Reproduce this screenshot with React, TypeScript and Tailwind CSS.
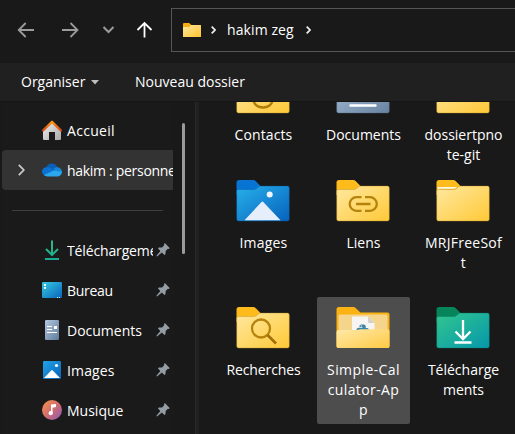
import React from "react";

type IconProps = { className?: string };

/* ---------- large folder icons ---------- */

type FolderProps = {
  id: string;
  tab?: string;
  from?: string;
  to?: string;
  edge?: string;
  children?: React.ReactNode;
};

function Folder({ id, tab = "#fdbb1c", from = "#ffe8a0", to = "#ffc937", edge = "#b58a25", children }: FolderProps) {
  return (
    <svg width="54" height="42" viewBox="0 0 54 42" className="block shrink-0">
      <defs>
        <linearGradient id={id} x1="0" y1="0" x2="1" y2="1">
          <stop offset="0" stopColor={from} />
          <stop offset="1" stopColor={to} />
        </linearGradient>
      </defs>
      <path d="M.5 2.5a2.500 2.500 0 0 1 2.500-2.500h13.500c1.500 0 2.600.4 3.600 1.500l4.400 4.500v9H.5z" fill={tab} />
      <path
        d="M.7 11a1.500 1.500 0 0 1 1.500-1.500h15.500c1.300 0 2.200-.4 3.100-1.200l1.500-1.300c.8-.7 1.500-.9 2.600-.9H51.500a1.800 1.800 0 0 1 1.800 1.800V39.200a1.800 1.800 0 0 1-1.800 1.800H2.500a1.800 1.800 0 0 1-1.800-1.800z"
        fill={`url(#${id})`}
        stroke={edge}
        strokeOpacity=".55"
        strokeWidth=".7"
      />
      {children}
    </svg>
  );
}

const ContactsIcon = () => (
  <Folder id="f-contacts">
    <circle cx="27" cy="17" r="4.500" fill="none" stroke="#b07c08" strokeWidth="2.500" />
    <path d="M17.500 27.500c0 10.500 19 10.500 19 0z" fill="none" stroke="#b07c08" strokeWidth="2.500" />
  </Folder>
);

const DocumentsIcon = () => (
  <Folder id="f-docs" tab="#5c7896" from="#a9c0da" to="#67829f" edge="#52677d">
    <path d="M14.500 22h25M14.500 27.500h25M14.500 33.500h25" stroke="#fff" strokeWidth="2.400" strokeLinecap="round" />
  </Folder>
);

const ImagesIcon = () => (
  <Folder id="f-images" tab="#0773d2" from="#27b0ea" to="#0762bd" edge="#07549f">
    <path d="M8.500 40.300 25.300 22.200a1.500 1.500 0 0 1 2.200 0L44.500 40.300z" fill="#e6edfb" />
    <circle cx="33.700" cy="14.400" r="3" fill="#f2f7ff" />
  </Folder>
);

const LinksIcon = () => (
  <Folder id="f-links">
    <g fill="none" stroke="#b5830c" strokeWidth="2.300">
      <path d="M25.500 17.200h-5a6.800 6.800 0 0 0 0 13.600h5M29 17.200h5a6.800 6.800 0 0 1 0 13.600h-5M20 24h14.500" />
    </g>
  </Folder>
);

const PlainIcon = ({ id }: { id: string }) => (
  <Folder id={id}>
    <defs>
      <linearGradient id="paper" x1="0" y1="0" x2="0" y2="1">
        <stop offset="0" stopColor="#fff" />
        <stop offset="1" stopColor="#fff" stopOpacity="0" />
      </linearGradient>
    </defs>
    <path d="M1.500 11.500V8a1 1 0 0 1 1-1H21l-1.200 1.100c-.8.700-1.500 1-2.600 1H4c-1.500 0-2.500.9-2.500 2.400z" fill="url(#paper)" />
  </Folder>
);

const SearchIcon = () => (
  <Folder id="f-search">
    <circle cx="25" cy="21.500" r="9" fill="none" stroke="#b5830c" strokeWidth="2.300" />
    <path d="m31.500 28 8.500 8.500" stroke="#a06f08" strokeWidth="2.600" />
  </Folder>
);

const DownloadFolderIcon = () => (
  <Folder id="f-down" tab="#07855a" from="#32c68e" to="#0697ab" edge="#077365">
    <path d="M27 13v18M19.500 24.500l7.500 7.500 7.500-7.500M18.500 35.500h17" fill="none" stroke="#fff" strokeWidth="2.300" />
  </Folder>
);

const OpenFolderIcon = () => (
  <svg width="54" height="42" viewBox="0 0 54 42" className="block shrink-0">
    <defs>
      <linearGradient id="open-front" x1="0" y1="0" x2="1" y2="1">
        <stop offset="0" stopColor="#ffe9a8" />
        <stop offset="1" stopColor="#ffca45" />
      </linearGradient>
    </defs>
    <path d="M.5 2.500A2.500 2.500 0 0 1 3 0h13.500c1.500 0 2.600.4 3.600 1.500L24.500 5.500H51.500a2 2 0 0 1 2 2V39a2 2 0 0 1-2 2H2.500a2 2 0 0 1-2-2z" fill="#fbb314" />
    <path d="M2.500 9a1.500 1.500 0 0 1 1.500-1.500H50A1.500 1.500 0 0 1 51.500 9v20h-49z" fill="#f4d58b" />
    <path d="M16 9.500h16l6.500 6.500v13H16z" fill="#f7f5f1" />
    <path d="M32 9.500v5.500a1 1 0 0 0 1 1h5.500z" fill="#d5d1c8" />
    <path d="M20.500 25v-2c0-1.500 1-2.300 2.300-2.300h3.700v-.7h-3v-1c0-1 1-1.500 3-1.500s3.200.6 3.200 1.800V21h1.300c1.300 0 2 1 2 2.500V25z" fill="#3d83a5" />
    <circle cx="25.300" cy="18.900" r=".6" fill="#fff" />
    <path d="M.5 25a2 2 0 0 1 2-2h17c1.200 0 1.800 0 2.800-.2l1.200-.3c.8-.2 1.600-.3 2.700-.3H51.500a2 2 0 0 1 2 2V39.200a2 2 0 0 1-2 1.900H2.500a2 2 0 0 1-2-1.900z" fill="url(#open-front)" />
  </svg>
);

/* ---------- small navigation icons ---------- */

const HomeIcon = () => (
  <svg width="20" height="20" viewBox="0 0 20 20">
    <defs>
      <linearGradient id="n-home" x1="0" y1="0" x2="1" y2="1">
        <stop offset="0" stopColor="#f0f0f0" />
        <stop offset="1" stopColor="#a9a9a9" />
      </linearGradient>
      <linearGradient id="n-roof" x1="0" y1="0" x2="0" y2="1">
        <stop offset="0" stopColor="#fb9a15" />
        <stop offset="1" stopColor="#d9460f" />
      </linearGradient>
    </defs>
    <path d="M1 9.500 10 1.500l9 8V19a1 1 0 0 1-1 1h-5v-8H7v8H2a1 1 0 0 1-1-1z" fill="url(#n-home)" />
    <path d="m1 10.500 9-8.700 9 8.700" fill="none" stroke="url(#n-roof)" strokeWidth="2.300" strokeLinecap="round" strokeLinejoin="round" />
  </svg>
);

const CloudIcon = () => (
  <svg width="20" height="20" viewBox="0 0 20 20">
    <path d="M4 7.500C5 5 7 3.400 9.700 3.400c2.800 0 5 1.600 5.900 4.100l-2 4.500-6-1z" fill="#0a5fb5" />
    <path d="M4.200 7.300c1.600-.4 3.200-.1 4.500.8l5.500 3.300L6.500 16H5a4.700 4.700 0 0 1-5-4.500c0-2.200 1.800-4.100 4.200-4.200z" fill="#0c72d2" />
    <path d="M14.800 7.300c3 0 5.200 2 5.200 4.600v1l-7-2.200-1.500-1.400c.9-1.300 2-2 3.300-2z" fill="#1586d8" />
    <path d="M2 15 12 10.400 19.900 11.800c0 2.700-1.700 4.600-4.200 4.600H5.500c-1.500 0-2.700-.5-3.500-1.400z" fill="#2aa7ee" />
  </svg>
);

const DownloadIcon = () => (
  <svg width="20" height="20" viewBox="0 0 20 20">
    <defs>
      <linearGradient id="n-dl" x1="0" y1="0" x2="0" y2="20" gradientUnits="userSpaceOnUse">
        <stop offset="0" stopColor="#32bd83" />
        <stop offset="1" stopColor="#19aa93" />
      </linearGradient>
    </defs>
    <path d="M10 .5v14M4 9l6 6 6-6M3 19h14" fill="none" stroke="url(#n-dl)" strokeWidth="2" />
  </svg>
);

const DesktopIcon = () => (
  <svg width="20" height="20" viewBox="0 0 20 20">
    <defs>
      <linearGradient id="n-desk" x1="0" y1="0" x2="1" y2="1">
        <stop offset="0" stopColor="#37cbe0" />
        <stop offset="1" stopColor="#0863bd" />
      </linearGradient>
    </defs>
    <rect y="2" width="20" height="16" rx="1.300" fill="url(#n-desk)" />
    <path d="M2 4h2v2H2zM2 7h2v2H2zM15 17h1v1h-1zM17 17h1v1h-1z" fill="#f1fdff" />
  </svg>
);

const DocIcon = () => (
  <svg width="20" height="20" viewBox="0 0 20 20">
    <defs>
      <linearGradient id="n-doc" x1="0" y1="0" x2="1" y2="1">
        <stop offset="0" stopColor="#b4c9df" />
        <stop offset="1" stopColor="#5e7b9b" />
      </linearGradient>
    </defs>
    <rect x="3" width="14" height="20" rx="1.300" fill="url(#n-doc)" />
    <path d="M5 6.500h5M5 9.500h5M5 12.500h10" stroke="#fff" strokeWidth="1.200" />
    <path d="M12 6h3v3h-3z" fill="#fff" />
  </svg>
);

const PictureIcon = () => (
  <svg width="20" height="20" viewBox="0 0 20 20">
    <defs>
      <linearGradient id="n-pic" x1="0" y1="0" x2="1" y2="1">
        <stop offset="0" stopColor="#21a4e5" />
        <stop offset="1" stopColor="#0862bb" />
      </linearGradient>
    </defs>
    <rect x="1" y="1" width="18" height="18" rx="1.200" fill="url(#n-pic)" />
    <path d="m2 18 7.200-7.600a1 1 0 0 1 1.500 0L18 18z" fill="#fff" />
    <circle cx="14.500" cy="5.500" r="1.600" fill="#fff" />
  </svg>
);

const MusicIcon = () => (
  <svg width="20" height="20" viewBox="0 0 20 20">
    <defs>
      <linearGradient id="n-mus" x1="0" y1="0" x2="1" y2="1">
        <stop offset=".1" stopColor="#f28d50" />
        <stop offset=".5" stopColor="#d16e6e" />
        <stop offset=".95" stopColor="#9258b5" />
      </linearGradient>
    </defs>
    <circle cx="10" cy="10" r="10" fill="url(#n-mus)" />
    <path d="M9 4.500 14 4v3l-3.500.7V13H9z" fill="#fff" />
    <circle cx="8.700" cy="13.200" r="2.100" fill="#fff" />
  </svg>
);

const Pin = ({ className }: IconProps) => (
  <svg width="14" height="14" viewBox="0 0 14 14" className={className}>
    <path d="M8.800 0 13.700 4.900 12.900 5.900 11.900 5.700 9.700 8 9.400 11.200 8.400 12 5.900 9.500 1.300 13.200.4 13.400.6 12.500 4.400 8 2 5.500 2.900 4.500 6.100 4.400 8.300 2.100 8 1z" fill="#929da4" />
  </svg>
);

const SmallFolder = () => (
  <svg width="18" height="14" viewBox="0 0 18 14" className="block">
    <defs>
      <linearGradient id="addr" x1="0" y1="0" x2="1" y2="1">
        <stop offset="0" stopColor="#ffe8a0" />
        <stop offset="1" stopColor="#ffc52d" />
      </linearGradient>
    </defs>
    <path d="M0 1a1 1 0 0 1 1-1h5.200L8.300 2v4H0z" fill="#f8ae12" />
    <path d="M0 4h6.200l1.800-2H17.500a.5.5 0 0 1 .5.500v11a.5.500 0 0 1-.5.500H.5a.5.500 0 0 1-.5-.5z" fill="url(#addr)" />
  </svg>
);

const Crumb = ({ className }: IconProps) => (
  <svg width="5" height="8" viewBox="0 0 5 8" className={className}>
    <path d="m.7.700 3.300 3.300L.7 7.300" fill="none" stroke="#f0f0f0" strokeWidth="1.700" />
  </svg>
);

/* ---------- content ---------- */

const pinned = [
  { label: "Téléchargements", icon: <DownloadIcon />, track: "tracking-[-0.01em]" },
  { label: "Bureau", icon: <DesktopIcon />, track: "tracking-[-0.3px]" },
  { label: "Documents", icon: <DocIcon />, track: "" },
  { label: "Images", icon: <PictureIcon />, track: "tracking-[0.15px]" },
  { label: "Musique", icon: <MusicIcon />, track: "" },
];

const files = [
  { lines: ["Contacts"], icon: <ContactsIcon />, track: "tracking-[0.1px]" },
  { lines: ["Documents"], icon: <DocumentsIcon />, track: "" },
  { lines: ["dossiertpno", "te-git"], icon: <Folder id="f-git" />, track: "" },
  { lines: ["Images"], icon: <ImagesIcon />, track: "tracking-[0.2px]" },
  { lines: ["Liens"], icon: <LinksIcon />, track: "" },
  { lines: ["MRJFreeSof", "t"], icon: <PlainIcon id="f-mrj" />, track: "tracking-[0.25px]" },
  { lines: ["Recherches"], icon: <SearchIcon />, track: "tracking-[-0.1px]" },
  { lines: ["Simple-Cal", "culator-Ap", "p"], icon: <OpenFolderIcon />, track: "tracking-[0.4px]", selected: true },
  { lines: ["Télécharge", "ments"], icon: <DownloadFolderIcon />, track: "" },
];

export default function App() {
  return (
    <div className="flex h-[434px] w-[515px] flex-col overflow-hidden bg-[#191919] font-['Open_Sans','Noto_Sans',sans-serif] text-[14px] leading-5 whitespace-nowrap text-white">
      <header className="flex h-[63px] shrink-0 items-start">
        <div className="flex h-[60px] w-[171px] shrink-0 items-center">
          <svg width="171" height="60" viewBox="0 0 171 60" fill="none" stroke="#9b9b9b" strokeWidth="1.800">
            <path d="M34 30H19M25.700 23l-7 7 7 7" />
            <path d="M62 30h15M70.500 23l7 7-7 7" />
            <path d="m103.500 27 5 5 5-5" strokeWidth="2" />
            <path d="M144.500 37.500V23M137.500 30l7-7 7 7" stroke="#fff" />
          </svg>
        </div>
        <div className="mt-2 -mr-1 flex h-11 flex-1 items-center border border-[#555] pl-[11px]">
          <SmallFolder />
          <Crumb className="ml-[10px]" />
          <span className="ml-[11px] w-[68px] tracking-[0.1px]">hakim zeg</span>
          <Crumb className="ml-[11px]" />
        </div>
      </header>

      <div className="flex h-[38px] shrink-0 items-center bg-[#202020] pl-[21px]">
        <span className="w-[65px]">Organiser</span>
        <svg width="8" height="5" viewBox="0 0 8 5" className="ml-[5px]">
          <path d="M0 0h8L4 4.500z" fill="#bdbdbd" />
        </svg>
        <span className="ml-[36px]">Nouveau dossier</span>
      </div>

      <div className="flex min-h-0 flex-1 border-t border-[#161616]">
        <nav className="ml-[2px] flex w-[171px] shrink-0 flex-col bg-[#1a1a1a] pt-2">
          <div className="flex h-10 shrink-0 items-center pl-10">
            <HomeIcon />
            <span className="ml-[5px] pt-px tracking-[0.3px]">Accueil</span>
          </div>
          <div className="flex h-10 shrink-0 items-center overflow-hidden rounded-l-sm bg-[#333] pl-4">
            <svg width="7" height="12" viewBox="0 0 7 12" className="shrink-0">
              <path d="m.8.800 5 5.200-5 5.200" fill="none" stroke="#ccc" strokeWidth="1.700" />
            </svg>
            <span className="ml-[17px] shrink-0">
              <CloudIcon />
            </span>
            <span className="ml-[5px] pt-px tracking-[-0.3px]">hakim : personnel</span>
          </div>
          <div className="mt-5 mr-[10px] mb-[19px] ml-[10px] h-px shrink-0 bg-[#3d3d3d]" />
          {pinned.map((p) => (
            <div key={p.label} className="flex h-10 shrink-0 items-center pl-10">
              <span className="shrink-0">{p.icon}</span>
              <span className={`ml-[5px] w-[86px] shrink-0 overflow-hidden pt-px ${p.track}`}>{p.label}</span>
              <Pin className="ml-[3px] shrink-0" />
            </div>
          ))}
        </nav>
        <div className="w-[22px] shrink-0 pt-[21px] pl-[9px]">
          <div className="h-[131px] w-[3px] rounded-full bg-[#9b9b9b]" />
        </div>
        <div className="w-1 shrink-0 border-l border-[#2a2a2a] bg-[#202020]" />
        <main className="flex-1 overflow-hidden pl-[14px]">
          <div className="mt-[-40px] grid grid-cols-[100px_100px_100px] grid-rows-[108px_127px_127px] justify-items-center">
            {files.map((f) => (
              <div
                key={f.lines.join("")}
                className={`flex h-full w-[93px] flex-col items-center rounded-[2px] pt-[10px] ${f.selected ? "bg-[#4d4d4d]" : ""}`}
              >
                {f.icon}
                <div className={`mt-[11px] pl-px text-center ${f.track}`}>
                  {f.lines.map((l) => (
                    <div key={l}>{l}</div>
                  ))}
                </div>
              </div>
            ))}
          </div>
        </main>
      </div>
    </div>
  );
}
